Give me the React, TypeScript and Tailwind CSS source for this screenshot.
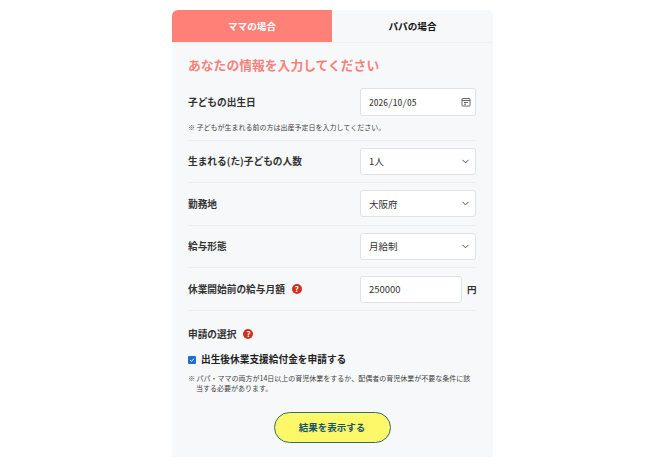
import { ChevronDown } from "lucide-react";

const font = "font-['Noto_Sans_CJK_JP','Noto_Sans',sans-serif]";

const Help = () => (
  <span className="ml-[7px] flex h-[10px] w-[10px] items-center justify-center rounded-full bg-[#d32f1f] text-[8px] leading-none font-bold text-white">
    ?
  </span>
);

const Select = ({ value }: { value: string }) => (
  <div className="flex h-[27px] w-[116px] items-center justify-between rounded-[3px] border border-[#e0e2e6] bg-white pr-[4px] pl-[8px] text-[9.5px] text-[#333]">
    <span>{value}</span>
    <ChevronDown size={11} strokeWidth={2} className="text-[#444]" />
  </div>
);

const Row = ({
  label,
  children,
}: {
  label: React.ReactNode;
  children: React.ReactNode;
}) => (
  <div className="flex h-[42.6px] items-center justify-between border-b border-[#eceef0]">
    <div className="flex items-center text-[9.7px] font-bold text-[#333]">
      {label}
    </div>
    {children}
  </div>
);

export default function App() {
  return (
    <div className={`flex h-[474px] justify-center overflow-hidden bg-white pt-[10px] pl-[3px] ${font}`}>
      <div className="h-[447px] w-[321px] overflow-hidden rounded-t-[6px] bg-[#f7f8fa]">
        <div className="flex h-[33px] border-b border-[#eef0f2] text-[9.6px] font-bold">
          <div className="flex w-[160px] items-center justify-center bg-[#ff8077] text-white">
            ママの場合
          </div>
          <div className="flex flex-1 items-center justify-center text-[#111]">
            パパの場合
          </div>
        </div>

        <div className="pr-[17px] pl-[16px]">
          <h2 className="mt-[13px] text-[12.8px] leading-[18px] font-bold text-[#f5837a]">
            あなたの情報を入力してください
          </h2>

          <div className="mt-[7px] flex h-[42px] items-center justify-between">
            <div className="text-[9.7px] font-bold text-[#333]">子どもの出生日</div>
            <div className="flex h-[28px] w-[116px] items-center justify-between rounded-[3px] border border-[#e0e2e6] bg-white pr-[4px] pl-[8px] text-[#333]">
              <span className="font-['Noto_Sans_Mono_CJK_JP','Noto_Sans_CJK_JP',monospace] text-[9.5px] [font-feature-settings:'hwid']">
                2026/10/05
              </span>
              <svg width="10" height="10" viewBox="0 0 10 10" fill="none" stroke="#666" strokeWidth="1">
                <rect x="1" y="1.5" width="8" height="7.5" rx="0.5" />
                <path d="M1 3.5h8M3 5.5h4M3 7.2h2" />
              </svg>
            </div>
          </div>
          <p className="h-[17.5px] border-b border-[#eceef0] text-[7px] leading-[8px] text-[#444]">
            ※ 子どもが生まれる前の方は出産予定日を入力してください。
          </p>

          <Row label="生まれる(た)子どもの人数">
            <Select value="1人" />
          </Row>
          <Row label="勤務地">
            <Select value="大阪府" />
          </Row>
          <Row label="給与形態">
            <Select value="月給制" />
          </Row>
          <Row
            label={
              <>
                休業開始前の給与月額
                <Help />
              </>
            }
          >
            <div className="flex items-center">
              <div className="flex h-[27px] w-[102px] items-center rounded-[3px] border border-[#e0e2e6] bg-white pl-[8px] text-[9.5px] text-[#333]">
                250000
              </div>
              <span className="ml-[5px] w-[9px] text-[9.5px] font-bold text-[#333]">円</span>
            </div>
          </Row>

          <div className="mt-[16px] flex items-center text-[9.7px] font-bold text-[#333]">
            申請の選択
            <Help />
          </div>

          <label className="mt-[11px] flex items-center text-[9.7px] font-bold text-[#222]">
            <span className="mr-[5px] flex h-[8px] w-[8px] items-center justify-center rounded-[1px] bg-[#1b6fd6]">
              <svg width="6" height="6" viewBox="0 0 6 6" fill="none" stroke="white" strokeWidth="1">
                <path d="M1 3l1.4 1.4L5 1.6" />
              </svg>
            </span>
            出生後休業支援給付金を申請する
          </label>

          <p className="mt-[6px] pl-[8px] -indent-[8px] text-[7px] leading-[10px] text-[#444]">
            ※ パパ・ママの両方が14日以上の育児休業をするか、配偶者の育児休業が不要な条件に該当する必要があります。
          </p>

          <div className="mt-[19px] flex justify-center">
            <button className="h-[31px] w-[117px] rounded-full border border-[#2e6f6a] bg-[#fdf76a] text-[9.5px] font-bold text-[#15566a]">
              結果を表示する
            </button>
          </div>
        </div>
      </div>
    </div>
  );
}
